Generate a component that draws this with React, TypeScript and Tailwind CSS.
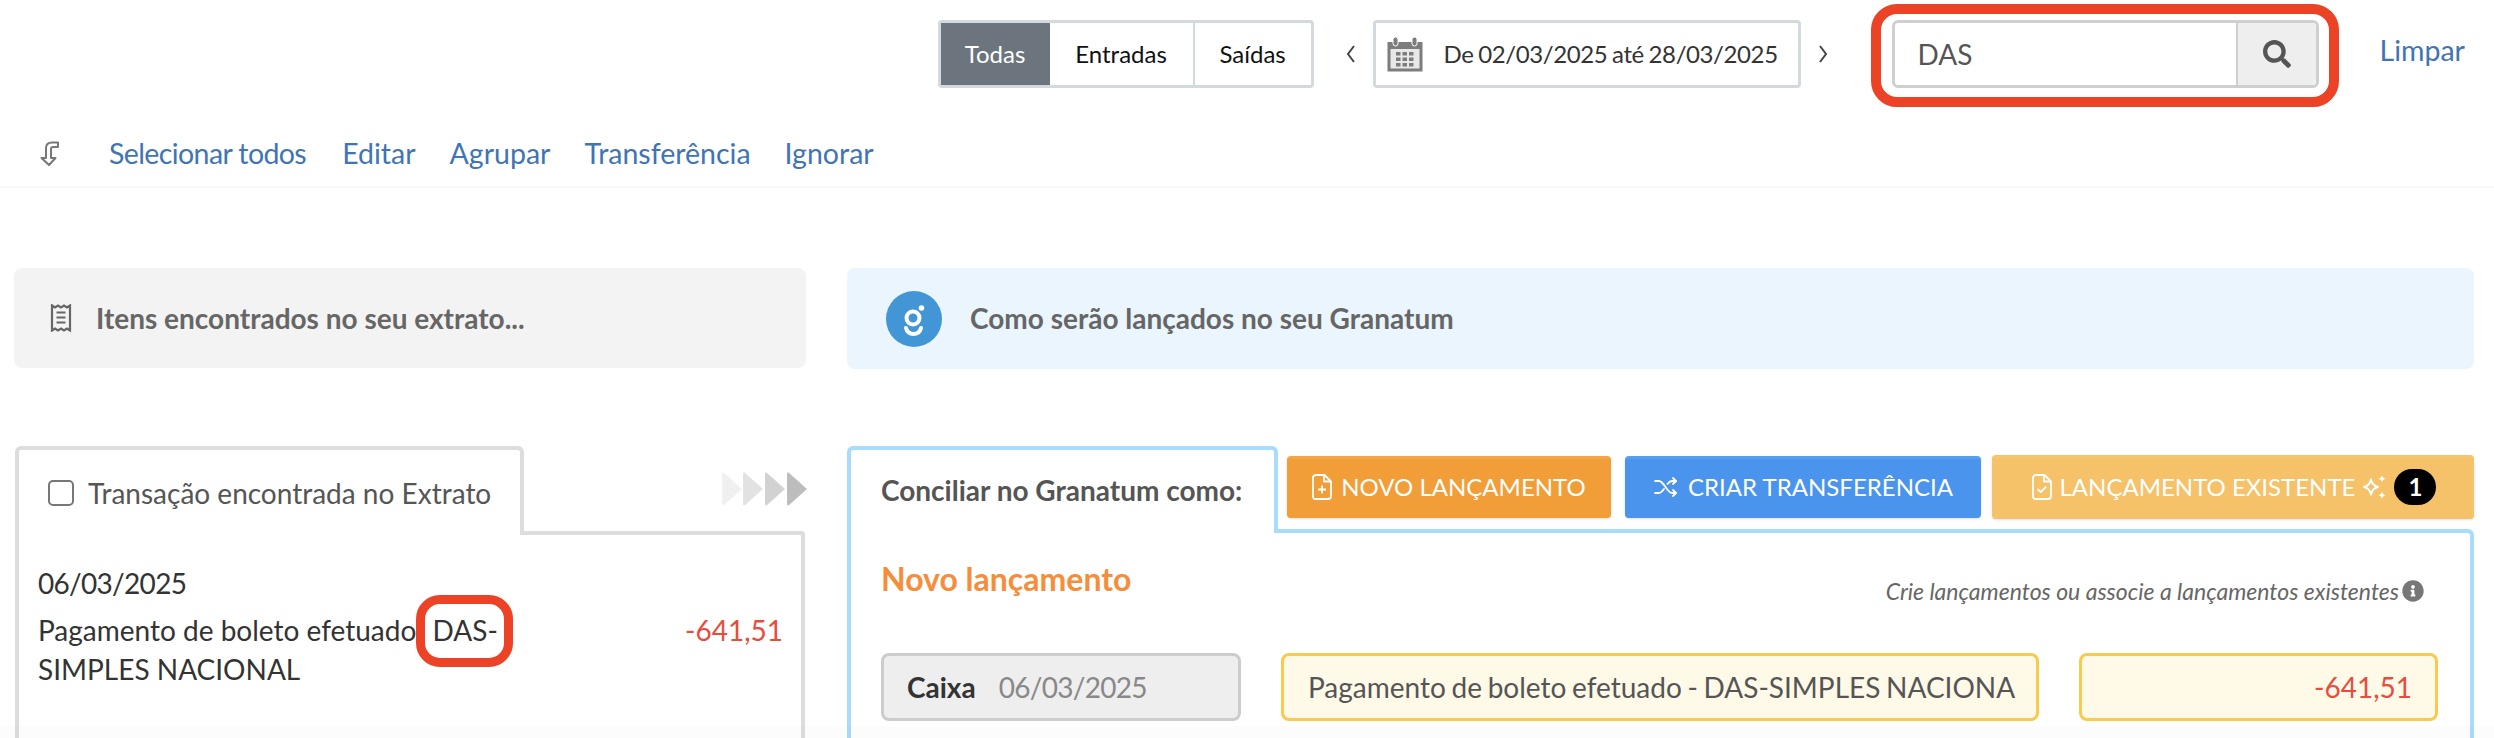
import { FaSearch, FaInfoCircle } from "react-icons/fa";

const lato = "font-['Lato',sans-serif]";

function Calendar() {
  return (
    <svg width="36" height="36" viewBox="0 0 36 36" className="shrink-0">
      <path d="M0.500 6h35v29.500h-35z" fill="#7d7d7d" />
      <path d="M3.500 13h29v19.500h-29z" fill="#e8e8e8" />
      <rect x="6" y="1" width="5" height="9" rx="2.500" fill="#7d7d7d" stroke="#fff" strokeWidth="1" />
      <rect x="25" y="1" width="5" height="9" rx="2.500" fill="#7d7d7d" stroke="#fff" strokeWidth="1" />
      {[9, 15.5, 22].map((x) =>
        [16, 21.5, 27].map((y) => <rect key={`${x}-${y}`} x={x} y={y} width="4.500" height="3.500" fill="#7d7d7d" />)
      )}
    </svg>
  );
}

function CurvedArrow() {
  return (
    <svg width="20" height="25" viewBox="0 0 20 25" fill="none" stroke="#777" strokeWidth="2" strokeLinejoin="round">
      <path d="M6 17V7c0-3.500 2.500-5.500 6-5.500h6v4.500h-5c-1.500 0-2 .8-2 2.200V17h4.500L9 24 1.500 17z" />
    </svg>
  );
}

function Receipt() {
  return (
    <svg width="22" height="28" viewBox="0 0 22 28" fill="none" stroke="#666" strokeWidth="2.200">
      <path d="M2 1.500l3 2 3-2 3 2 3-2 3 2 3-2v25l-3-2-3 2-3-2-3 2-3-2-3 2z" />
      <path d="M6.500 8.500h9M6.500 13.500h9M6.500 18.500h9" />
    </svg>
  );
}

function GranatumLogo() {
  return (
    <svg width="56" height="56" viewBox="0 0 56 56" className="shrink-0">
      <circle cx="28" cy="28" r="28" fill="#4296d5" />
      <circle cx="27" cy="27" r="6.500" fill="none" stroke="#fff" strokeWidth="4" />
      <circle cx="35.500" cy="17" r="2.800" fill="#fff" />
      <path d="M20 37c1 4 4 6 7.500 6s6.500-2 7.500-6" fill="none" stroke="#fff" strokeWidth="4" strokeLinecap="round" />
    </svg>
  );
}

function Chevrons() {
  return (
    <svg width="88" height="34" viewBox="0 0 84 34" preserveAspectRatio="none" className="shrink-0">
      <path d="M2 2c0-1 1-2 2-1l17 16L4 33c-1 1-2 0-2-1z" fill="#f0f0f0" />
      <path d="M22 2c0-1 1-2 2-1l17 16-17 16c-1 1-2 0-2-1z" fill="#e2e2e2" />
      <path d="M43 2c0-1 1-2 2-1l17 16-17 16c-1 1-2 0-2-1z" fill="#d2d2d2" />
      <path d="M64 2c0-1 1-2 2-1l17 16-17 16c-1 1-2 0-2-1z" fill="#bdbdbd" />
    </svg>
  );
}

function FilePlus() {
  return (
    <svg width="20" height="26" viewBox="0 0 20 26" fill="none" stroke="#fff" strokeWidth="1.800" strokeLinejoin="round" className="shrink-0">
      <path d="M3.500 1h9l6.500 6.500V22a3 3 0 0 1-3 3H3.500a2.500 2.500 0 0 1-2.500-3V4a3 3 0 0 1 2.500-3z" />
      <path d="M12 1v6.500h7M10 11.500v8M6 15.500h8" />
    </svg>
  );
}

function FileCheck() {
  return (
    <svg width="20" height="26" viewBox="0 0 20 26" fill="none" stroke="#fff" strokeWidth="1.800" strokeLinejoin="round" className="shrink-0">
      <path d="M3.500 1h9l6.500 6.500V22a3 3 0 0 1-3 3H3.500a2.500 2.500 0 0 1-2.500-3V4a3 3 0 0 1 2.500-3z" />
      <path d="M12 1v6.500h7M5.500 15l3.200 3.200 5.500-5.500" />
    </svg>
  );
}

function Shuffle() {
  return (
    <svg width="26" height="22" viewBox="0 0 24 22" fill="none" stroke="#fff" strokeWidth="1.800" strokeLinecap="round" strokeLinejoin="round" className="shrink-0">
      <path d="M1 5h4c5 0 8 12 13 12h4M1 17h4c2 0 3.500-2 5-4M13.500 8c1.200-1.700 2.600-3 4.500-3h4" />
      <path d="M19 2l3 3-3 3M19 14l3 3-3 3" />
    </svg>
  );
}

function Sparkles() {
  return (
    <svg width="24" height="26" viewBox="0 0 24 26" fill="none" stroke="#fff" strokeWidth="2" strokeLinejoin="round" className="shrink-0">
      <path d="M8 5.500c1 4.500 3 6.500 7 7.500-4 1-6 3-7 7.500-1-4.500-3-6.500-7-7.500 4-1 6-3 7-7.500z" />
      <path d="M19 1c.5 2.300 1.300 3.100 3.800 3.800-2.500.6-3.300 1.400-3.800 3.700-.5-2.300-1.300-3.100-3.800-3.700 2.500-.7 3.300-1.500 3.800-3.800zM19 17.500c.5 2.300 1.300 3.100 3.800 3.800-2.500.6-3.300 1.400-3.800 3.700-.5-2.300-1.300-3.100-3.800-3.700 2.500-.7 3.300-1.500 3.800-3.800z" fill="#fff" stroke="none" />
    </svg>
  );
}

export default function App() {
  const links = ["Agrupar", "Transferência", "Ignorar"];

  return (
    <div className={`${lato} relative h-[738px] w-[2494px] overflow-hidden bg-white text-[#333]`}>
      {/* Top filters */}
      <div className="flex h-[128px] items-start justify-end pt-[4px] pr-[29px]">
        <div className="mt-[16px] flex h-[68px] w-[376px] rounded-[4px] border-[3px] border-[#d2dade] text-[24px] text-[#111]">
          <div className="flex w-[109px] items-center justify-center bg-[#6c757d] text-white">Todas</div>
          <div className="flex w-[145px] items-center justify-center border-r-[2px] border-[#d2dade]">Entradas</div>
          <div className="flex flex-1 items-center justify-center">Saídas</div>
        </div>
        <div className="mt-[16px] flex h-[68px] w-[59px] items-center justify-center pl-[16px] text-[#444]">
          <svg width="14" height="22" viewBox="0 0 14 22" fill="none" stroke="#444" strokeWidth="2"><path d="M10 3l-6 8 6 8" /></svg>
        </div>
        <div className="mt-[16px] flex h-[68px] w-[428px] items-center gap-[21px] rounded-[4px] border-[3px] border-[#d2dade] pl-[11px] text-[24px] tracking-[-0.4px] text-[#333] [word-spacing:-1px]">
          <Calendar />
          De 02/03/2025 até 28/03/2025
        </div>
        <div className="mt-[16px] flex h-[68px] w-[70px] items-center justify-center pr-[26px]">
          <svg width="14" height="22" viewBox="0 0 14 22" fill="none" stroke="#444" strokeWidth="2"><path d="M4 3l6 8-6 8" /></svg>
        </div>
        <div className="h-[103px] w-[468px] rounded-[26px] border-[10px] border-[#ec4225] pt-[6px] pr-[10px] pb-[9px] pl-[11px]">
          <div className="flex h-[68px] rounded-[6px] border-[3px] border-[#cfcfcf]">
            <div className="flex flex-1 items-center pl-[23px] text-[28px] text-[#555]">DAS</div>
            <div className="flex w-[80px] items-center justify-center rounded-r-[4px] border-l-[2px] border-[#cfcfcf] bg-[#eee] text-[#555]">
              <FaSearch size={28} />
            </div>
          </div>
        </div>
        <a className="mt-[26px] ml-[41px] text-[28.5px] leading-[40px] text-[#3f74b5]">Limpar</a>
      </div>

      {/* Actions */}
      <div className="flex h-[60px] items-start border-b-[2px] border-[#f8f8f8] pl-[40px] text-[28.5px] leading-[50px] text-[#3f74b5]">
        <div className="mt-[13px] mr-[49px] h-[25px] w-[20px] leading-none"><CurvedArrow /></div>
        <a className="mr-[36px] tracking-[-0.6px]">Selecionar todos</a>
        <a className="mr-[34px]">Editar</a>
        {links.map((l) => (
          <a key={l} className="mr-[34px]">{l}</a>
        ))}
      </div>

      {/* Column headers */}
      <div className="mt-[80px] flex gap-[41px] pr-[20px] pl-[14px]">
        <div className="flex h-[100px] w-[792px] items-center gap-[24px] rounded-[8px] bg-[#f3f3f3] pl-[36px] text-[28px] font-bold text-[#666]">
          <Receipt />
          Itens encontrados no seu extrato...
        </div>
        <div className="flex h-[101px] flex-1 items-center gap-[28px] rounded-[8px] bg-[#eaf5fd] pl-[39px] text-[28px] font-bold text-[#666]">
          <GranatumLogo />
          <span className="-mt-[2px]">Como serão lançados no seu Granatum</span>
        </div>
      </div>

      <div className="mt-[77px] flex items-start gap-[42px] pr-[20px] pl-[15px]">
        {/* Extrato */}
        <div className="w-[790px] shrink-0">
          <div className="flex items-end">
            <div className="relative z-10 -mb-[4px] flex h-[89px] w-[509px] items-center gap-[14px] rounded-t-[6px] border-[4px] border-b-0 border-[#ddd] bg-white pl-[29px] text-[28px] text-[#555]">
              <span className="h-[26px] w-[26px] shrink-0 rounded-[5px] border-[2px] border-[#777]" />
              Transação encontrada no Extrato
            </div>
            <div className="-mr-[3px] flex flex-1 justify-end self-start pt-[26px]"><Chevrons /></div>
          </div>
          <div className="h-[210px] rounded-tr-[4px] border-x-[4px] border-t-[4px] border-[#ddd] pt-[29px] pr-[18px] pl-[19px] text-[28px] leading-[39px] text-[#333]">
            <div className="tracking-[-0.7px]">06/03/2025</div>
            <div className="mt-[8px] flex justify-between">
              <div className="relative w-[480px]">
                Pagamento de boleto efetuado <span className="ml-[9px]">DAS-</span><br />SIMPLES NACIONAL
                <span className="absolute top-[-16px] left-[378px] h-[72px] w-[97px] rounded-[24px] border-[9px] border-[#ec4225]" />
              </div>
              <div className="text-[#e74c3c]">-641,51</div>
            </div>
          </div>
        </div>

        {/* Granatum */}
        <div className="min-w-0 flex-1">
          <div className="flex items-start">
            <div className="relative z-10 -mb-[4px] flex h-[87px] w-[431px] shrink-0 items-center rounded-t-[6px] border-[4px] border-b-0 border-[#a8dcfc] bg-white pb-[4px] pl-[30px] text-[28px] font-bold text-[#555]">
              Conciliar no Granatum como:
            </div>
            <div className="mt-[9px] ml-[9px] flex h-[64px] items-center text-[24px] text-white">
              <button className="flex h-[62px] w-[324px] items-center justify-center gap-[9px] rounded-[4px] border-t-[3px] border-[#f3a54a] bg-[#f19d38] pb-[4px] shadow-sm">
                <FilePlus /> NOVO LANÇAMENTO
              </button>
              <button className="ml-[14px] flex h-[62px] w-[356px] items-center justify-center gap-[9px] rounded-[4px] border-t-[3px] border-[#5a9ef0] bg-[#4a94ee] pb-[4px] shadow-sm">
                <Shuffle /> CRIAR TRANSFERÊNCIA
              </button>
              <button className="ml-[11px] flex h-[64px] w-[482px] items-center justify-center gap-[8px] rounded-[4px] border-t-[3px] border-[#f5c56f] bg-[#f5c169] pb-[4px] pl-[2px] shadow-sm">
                <FileCheck /> LANÇAMENTO EXISTENTE
                <span className="flex items-center gap-[7px]">
                  <Sparkles />
                  <span className="flex h-[36px] w-[42px] items-center justify-center rounded-full bg-black text-[24px] font-bold">1</span>
                </span>
              </button>
            </div>
          </div>
          <div className="h-[220px] rounded-tr-[6px] border-x-[4px] border-t-[4px] border-[#a8dcfc] pt-[24px] pr-[31px] pl-[30px]">
            <div className="flex h-[92px] items-start justify-between">
              <div className="text-[32px] leading-[44px] font-bold text-[#f58d3a]">Novo lançamento</div>
              <div className="mt-[19px] mr-[15px] flex items-center gap-[3px] text-[23px] leading-[30px] text-[#666] italic">
                Crie lançamentos ou associe a lançamentos existentes
                <FaInfoCircle size={22} className="text-[#777]" />
              </div>
            </div>
            <div className="mt-[4px] flex gap-[40px] text-[28px]">
              <div className="flex h-[68px] w-[360px] items-center gap-[23px] rounded-[8px] border-[3px] border-[#ccc] bg-[#eee] pl-[23px]">
                <span className="font-bold text-[#333]">Caixa</span>
                <span className="tracking-[-0.7px] text-[#888]">06/03/2025</span>
              </div>
              <div className="flex h-[68px] w-[758px] items-center rounded-[8px] border-[3px] border-[#f8ca4e] bg-[#fff9e8] pl-[24px] text-[#555] [word-spacing:-1.5px]">
                Pagamento de boleto efetuado - DAS-SIMPLES NACIONA
              </div>
              <div className="flex h-[68px] w-[359px] items-center justify-end rounded-[8px] border-[3px] border-[#f8ca4e] bg-[#fff9e8] pr-[23px] text-[#e74c3c]">
                -641,51
              </div>
            </div>
          </div>
        </div>
      </div>

      {/* faint fade at the bottom of the capture */}
      <div className="pointer-events-none absolute inset-x-0 bottom-0 h-[12px] bg-black/[0.01]" />
    </div>
  );
}
